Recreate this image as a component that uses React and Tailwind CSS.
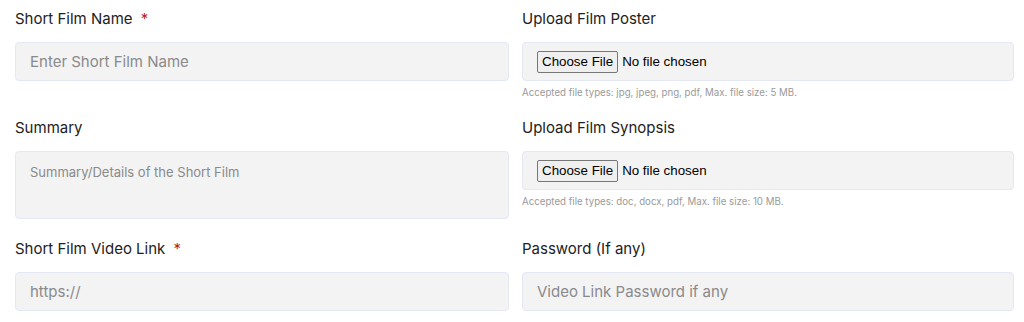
export default function App() {
  const label = "block text-[15px] leading-[22px] text-[#222] font-['Inter',sans-serif]";
  const field =
    "block w-full h-[39px] rounded-[4px] border border-[#e4e8f4] bg-[#f3f3f4] px-[14px] text-[15px] text-[#222] font-['Inter',sans-serif] placeholder:text-[#8a8a8a] outline-none";
  const fileBox =
    "flex h-[39px] w-full items-center rounded-[4px] border border-[#e4e8f4] bg-[#f3f3f4] px-[14px]";
  const fileInput =
    "text-[13.33px] leading-[18px] font-['Liberation_Sans',Arial,sans-serif] text-black file:mr-[4px] file:rounded-[2px] file:border file:border-solid file:border-[#767676] file:bg-[#efefef] file:px-[4px] file:py-[1px] file:text-[13.33px] file:text-black file:font-['Liberation_Sans',Arial,sans-serif]";
  const help = "mt-1 text-[9.7px] leading-4 text-[#9a9a9a] font-['Inter',sans-serif]";
  const row = "grid grid-cols-[494px_492px] gap-x-[13px]";

  return (
    <div className="min-h-[322px] w-[1024px] bg-white pl-[15px] pt-2 font-['Inter',sans-serif]">
      <div className={row}>
        <div>
          <label className={label}>
            Short Film Name <span className="ml-1 text-[#b3261e]">*</span>
          </label>
          <input className={`${field} mt-3`} placeholder="Enter Short Film Name" />
        </div>
        <div>
          <label className={label}>Upload Film Poster</label>
          <div className={`${fileBox} mt-3`}>
            <input type="file" className={fileInput} />
          </div>
          <p className={help}>Accepted file types: jpg, jpeg, png, pdf, Max. file size: 5 MB.</p>
        </div>
      </div>

      <div className={`${row} mt-4`}>
        <div>
          <label className={label}>Summary</label>
          <textarea
            className="mt-3 block h-[68px] w-full resize-none rounded-[4px] border border-[#e4e8f4] bg-[#f3f3f4] px-[14px] pt-[11px] text-[13px] leading-[18px] font-['Inter',sans-serif] placeholder:text-[#8a8a8a] outline-none"
            placeholder="Summary/Details of the Short Film"
          />
        </div>
        <div>
          <label className={label}>Upload Film Synopsis</label>
          <div className={`${fileBox} mt-3`}>
            <input type="file" className={fileInput} />
          </div>
          <p className={help}>Accepted file types: doc, docx, pdf, Max. file size: 10 MB.</p>
        </div>
      </div>

      <div className={`${row} mt-[19px]`}>
        <div>
          <label className={label}>
            Short Film Video Link <span className="ml-1 text-[#b3261e]">*</span>
          </label>
          <input className={`${field} mt-3`} placeholder="https://" />
        </div>
        <div>
          <label className={label}>Password (If any)</label>
          <input className={`${field} mt-3`} placeholder="Video Link Password if any" />
        </div>
      </div>
    </div>
  );
}
